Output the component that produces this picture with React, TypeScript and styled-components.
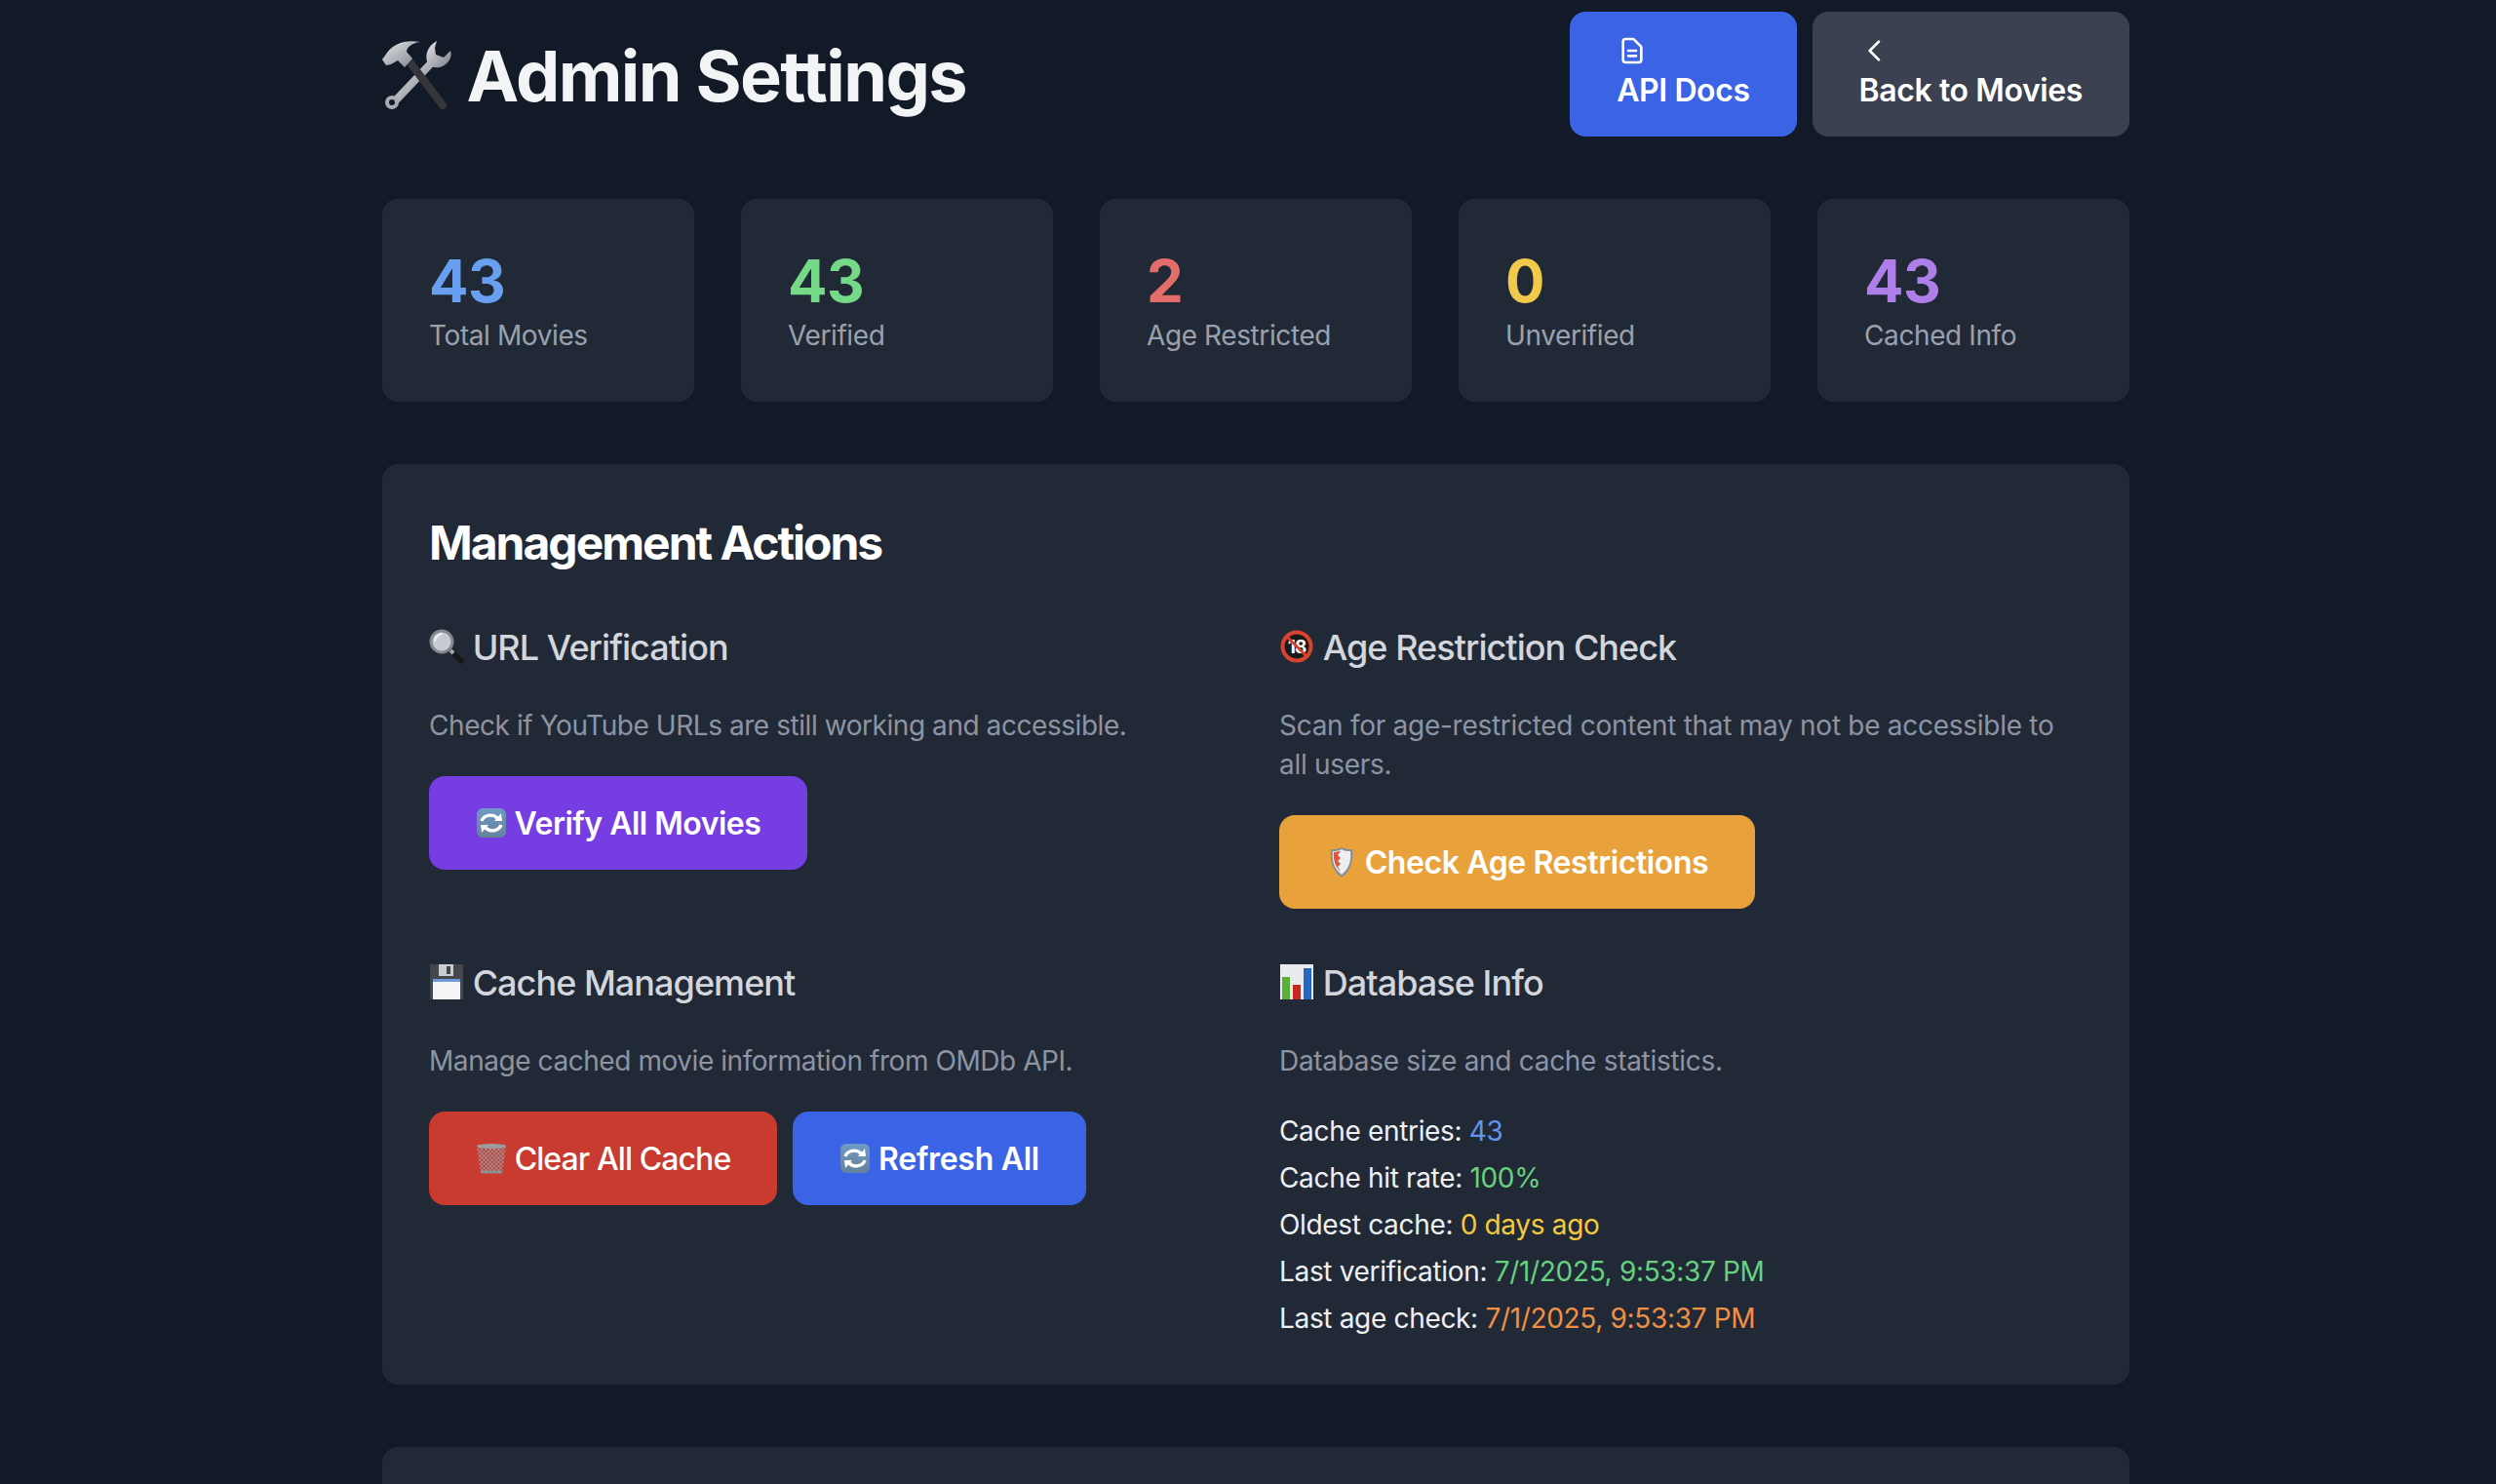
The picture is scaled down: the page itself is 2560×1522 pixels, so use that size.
import React from "react";
import styled, { createGlobalStyle } from "styled-components";

const GlobalStyle = createGlobalStyle`
  html, body {
    margin: 0;
    height: 100vh;
    overflow: hidden;
    background: #121927;
  }
  body {
    font-family: Inter, "Liberation Sans", sans-serif;
    -webkit-font-smoothing: antialiased;
  }
  * {
    box-sizing: border-box;
  }
`;

const Page = styled.div`
  width: 1792px;
  margin-left: 392px;
  padding-top: 12px;
  display: flex;
  flex-direction: column;
  gap: 64px;
`;

const Header = styled.header`
  display: flex;
  justify-content: space-between;
  align-items: flex-start;
`;

const Title = styled.h1`
  margin: 26px 0 0;
  font-size: 72px;
  line-height: 80px;
  font-weight: 700;
  letter-spacing: -1.6px;
  color: #f3f4f6;
  & svg {
    margin-right: -1px;
  }
`;

const HeaderActions = styled.div`
  display: flex;
  gap: 16px;
`;

const LinkButton = styled.a<{ $bg: string }>`
  display: block;
  height: 128px;
  padding: 24px 48px;
  border-radius: 16px;
  background: ${(p) => p.$bg};
  color: #fff;
  font-size: 32px;
  line-height: 48px;
  font-weight: 600;
  letter-spacing: -0.4px;
  & svg {
    display: block;
    width: 32px;
    height: 32px;
    margin-bottom: 1px;
  }
`;

const StatGrid = styled.div`
  display: grid;
  grid-template-columns: repeat(5, 1fr);
  gap: 48px;
`;

const StatCard = styled.div`
  padding: 48px;
  border-radius: 16px;
  background: #222936;
`;

const StatValue = styled.div<{ $color: string }>`
  font-size: 60px;
  line-height: 72px;
  font-weight: 700;
  letter-spacing: -0.5px;
  color: ${(p) => p.$color};
`;

const StatLabel = styled.div`
  font-size: 28px;
  line-height: 40px;
  letter-spacing: -0.4px;
  color: #9aa1ae;
`;

const Panel = styled.section`
  padding: 48px;
  border-radius: 16px;
  background: #222936;
`;

const PanelTitle = styled.h2`
  margin: 0 0 48px;
  padding-top: 1px;
  height: 64px;
  font-size: 48px;
  line-height: 64px;
  font-weight: 700;
  letter-spacing: -2px;
  color: #fff;
`;

const ActionGrid = styled.div`
  display: grid;
  grid-template-columns: 1fr 1fr;
  gap: 48px;
`;

const ActionTitle = styled.h3`
  margin: 0 0 32px;
  font-size: 36px;
  line-height: 56px;
  font-weight: 550;
  letter-spacing: -0.95px;
  color: #d3d6dc;
`;

const ActionText = styled.p<{ $tracking?: number }>`
  margin: 0 0 32px;
  font-size: 28px;
  line-height: 40px;
  letter-spacing: ${(p) => p.$tracking ?? -0.44}px;
  color: #8d94a3;
`;

const ButtonRow = styled.div`
  display: flex;
  gap: 16px;
`;

const ActionButton = styled.button<{ $bg: string; $weight?: number; $tracking?: number }>`
  height: 96px;
  padding: 2px 48px 0;
  border: 0;
  border-radius: 16px;
  background: ${(p) => p.$bg};
  color: #fff;
  font-family: inherit;
  font-size: 32px;
  line-height: 48px;
  font-weight: ${(p) => p.$weight ?? 600};
  letter-spacing: ${(p) => p.$tracking ?? -0.5}px;
`;

const InfoList = styled.div`
  display: flex;
  flex-direction: column;
  gap: 8px;
`;

const InfoRow = styled.div`
  font-size: 28px;
  line-height: 40px;
  letter-spacing: -0.33px;
  color: #eef0f3;
`;

const InfoValue = styled.span<{ $color: string }>`
  color: ${(p) => p.$color};
`;

const NextPanel = styled.div`
  height: 200px;
  border-radius: 16px;
  background: #222936;
`;

const Emoji = styled.svg`
  display: inline-block;
  width: 1em;
  height: 1em;
  vertical-align: -0.12em;
`;

const ToolsEmoji = () => (
  <Emoji viewBox="0 0 72 72">
    <defs>
      <linearGradient id="steel" x1="0" y1="0" x2="1" y2="1">
        <stop offset="0" stopColor="#e4e6ea" />
        <stop offset="1" stopColor="#7d8088" />
      </linearGradient>
    </defs>
    <path d="M10 66 L50 24" stroke="url(#steel)" strokeWidth="8" strokeLinecap="round" />
    <circle cx="10" cy="64" r="7" fill="#a9acb3" />
    <circle cx="10" cy="64" r="3" fill="#121927" />
    <path d="M56 1 C46 6 43 17 47 24 C51 30 62 30 68 22 C71 18 71 14 70 11 L63 18 L55 15 L54 8 Z" fill="url(#steel)" />
    <path d="M27 21 L62 67" stroke="#34363b" strokeWidth="8" strokeLinecap="round" />
    <path d="M0 20 L5 13 C11 4 24 -1 39 2 C30 3 25 8 25 12 L31 19 L23 28 L16 21 L9 25 L4 26 Z" fill="url(#steel)" />
  </Emoji>
);

const SearchEmoji = () => (
  <Emoji viewBox="0 0 36 36">
    <path d="M23 23 L33 33" stroke="#17181b" strokeWidth="5.5" strokeLinecap="round" />
    <path d="M22 22 L25 25" stroke="#a5a8ad" strokeWidth="4" />
    <circle cx="13" cy="13" r="11" fill="#c7cbd2" stroke="#85888f" strokeWidth="3" />
    <path d="M6 12 C7 8 9 6 13 5" stroke="#eef0f3" strokeWidth="2" fill="none" strokeLinecap="round" />
  </Emoji>
);

const NoAdultEmoji = () => (
  <Emoji viewBox="0 0 36 36">
    <circle cx="18" cy="18" r="14.5" fill="#1a1a1c" stroke="#d8432f" strokeWidth="4" />
    <text x="18" y="25" textAnchor="middle" fontFamily="Inter, sans-serif" fontSize="19" fontWeight="700" fill="#fff">
      18
    </text>
    <path d="M8 8 L28 28" stroke="#d8432f" strokeWidth="3" />
  </Emoji>
);

const RefreshEmoji = () => (
  <Emoji viewBox="0 0 32 32">
    <defs>
      <linearGradient id="refreshBg" x1="0" y1="0" x2="0" y2="1">
        <stop offset="0" stopColor="#6f9ac6" />
        <stop offset="1" stopColor="#66819b" />
      </linearGradient>
    </defs>
    <rect x="1" y="1" width="30" height="30" rx="6" fill="url(#refreshBg)" />
    <path d="M6 14 C8 8 17 6 22 11" stroke="#fff" strokeWidth="3.4" fill="none" />
    <path d="M19 14 L27 14 L26 6 Z" fill="#fff" />
    <path d="M26 18 C24 24 15 26 10 21" stroke="#fff" strokeWidth="3.4" fill="none" />
    <path d="M13 18 L5 18 L6 26 Z" fill="#fff" />
  </Emoji>
);

const ShieldEmoji = () => (
  <Emoji viewBox="0 0 32 32">
    <path d="M16 1 C20 3 24 3 27 3 C28 14 26 25 16 32 C6 25 4 14 5 3 C8 3 12 3 16 1 Z" fill="#8b8e94" />
    <path d="M16 3 C19 5 22 5 25 5 C26 14 24 23 16 29 Z" fill="#eceef0" />
    <path d="M16 3 C13 5 10 5 7 5 C6 14 8 23 16 29 Z" fill="#eceef0" />
    <path d="M8 6 L15 5 L12 9 L15 12 L12 15 L15 18 L12 21 L15 26 C10 22 7 14 8 6 Z" fill="#d9573f" />
  </Emoji>
);

const FloppyEmoji = () => (
  <Emoji viewBox="0 0 36 36">
    <rect x="1" y="0" width="34" height="36" fill="#45474c" />
    <rect x="10" y="0" width="15" height="12" fill="#c9ccd1" />
    <rect x="18" y="2" width="4" height="8" fill="#45474c" />
    <rect x="4" y="15" width="28" height="21" fill="#f4f5f7" />
    <rect x="4" y="15" width="28" height="3" fill="#6c9bd8" />
  </Emoji>
);

const ChartEmoji = () => (
  <Emoji viewBox="0 0 36 36">
    <rect x="1" y="0" width="34" height="36" fill="#e9ebee" />
    <rect x="3" y="13" width="8" height="23" fill="#58b038" />
    <rect x="14" y="21" width="8" height="15" fill="#c8281f" />
    <rect x="25" y="4" width="8" height="32" fill="#2468c4" />
  </Emoji>
);

const TrashEmoji = () => (
  <Emoji viewBox="0 0 32 32">
    <defs>
      <pattern id="mesh" width="3" height="3" patternUnits="userSpaceOnUse" patternTransform="rotate(45)">
        <rect width="3" height="3" fill="#a8453f" />
        <path d="M0 0 H3 M0 0 V3" stroke="#c9c5c5" strokeWidth="0.9" />
      </pattern>
    </defs>
    <path d="M1 3 H31 L27 31 H5 Z" fill="url(#mesh)" />
    <ellipse cx="16" cy="3.5" rx="15" ry="2.4" fill="#9e9c9e" />
    <rect x="5" y="28.5" width="22" height="3" rx="1" fill="#8f8e90" />
  </Emoji>
);

const stats = [
  { value: "43", label: "Total Movies", color: "#689ff1" },
  { value: "43", label: "Verified", color: "#76d988" },
  { value: "2", label: "Age Restricted", color: "#e26d6b" },
  { value: "0", label: "Unverified", color: "#f1ca4b" },
  { value: "43", label: "Cached Info", color: "#ae7ee9" },
];

const info = [
  { label: "Cache entries:", value: "43", color: "#5f95ec" },
  { label: "Cache hit rate:", value: "100%", color: "#66d180" },
  { label: "Oldest cache:", value: "0 days ago", color: "#f3c93f" },
  { label: "Last verification:", value: "7/1/2025, 9:53:37 PM", color: "#66d180" },
  { label: "Last age check:", value: "7/1/2025, 9:53:37 PM", color: "#ee9145" },
];

const App = () => {
  return (
    <Page>
      <GlobalStyle />
      <Header>
        <Title>
          <ToolsEmoji /> Admin Settings
        </Title>
        <HeaderActions>
          <LinkButton $bg="#3a63e6">
            <svg viewBox="0 0 24 24" fill="none" stroke="currentColor" strokeWidth="2" strokeLinecap="round" strokeLinejoin="round">
              <path d="M9 12h6m-6 4h6m2 5H7a2 2 0 01-2-2V5a2 2 0 012-2h5.586a1 1 0 01.707.293l5.414 5.414a1 1 0 01.293.707V19a2 2 0 01-2 2z" />
            </svg>
            API Docs
          </LinkButton>
          <LinkButton $bg="#3b4150">
            <svg viewBox="0 0 24 24" fill="none" stroke="currentColor" strokeWidth="2" strokeLinecap="round" strokeLinejoin="round">
              <path d="M15 19l-7-7 7-7" />
            </svg>
            Back to Movies
          </LinkButton>
        </HeaderActions>
      </Header>

      <StatGrid>
        {stats.map((s) => (
          <StatCard key={s.label}>
            <StatValue $color={s.color}>{s.value}</StatValue>
            <StatLabel>{s.label}</StatLabel>
          </StatCard>
        ))}
      </StatGrid>

      <Panel>
        <PanelTitle>Management Actions</PanelTitle>
        <ActionGrid>
          <div>
            <ActionTitle>
              <SearchEmoji /> URL Verification
            </ActionTitle>
            <ActionText>Check if YouTube URLs are still working and accessible.</ActionText>
            <ActionButton $bg="#753de2">
              <RefreshEmoji /> Verify All Movies
            </ActionButton>
          </div>
          <div>
            <ActionTitle>
              <NoAdultEmoji /> Age Restriction Check
            </ActionTitle>
            <ActionText $tracking={-0.28}>
              Scan for age-restricted content that may not be accessible to all users.
            </ActionText>
            <ActionButton $bg="#e9a23b" $tracking={-0.4}>
              <ShieldEmoji /> Check Age Restrictions
            </ActionButton>
          </div>
          <div>
            <ActionTitle>
              <FloppyEmoji /> Cache Management
            </ActionTitle>
            <ActionText>Manage cached movie information from OMDb API.</ActionText>
            <ButtonRow>
              <ActionButton $bg="#c93a30" $weight={500} $tracking={-0.9}>
                <TrashEmoji /> Clear All Cache
              </ActionButton>
              <ActionButton $bg="#3a63e6" $tracking={-0.3}>
                <RefreshEmoji /> Refresh All
              </ActionButton>
            </ButtonRow>
          </div>
          <div>
            <ActionTitle>
              <ChartEmoji /> Database Info
            </ActionTitle>
            <ActionText $tracking={-0.3}>Database size and cache statistics.</ActionText>
            <InfoList>
              {info.map((row) => (
                <InfoRow key={row.label}>
                  {row.label} <InfoValue $color={row.color}>{row.value}</InfoValue>
                </InfoRow>
              ))}
            </InfoList>
          </div>
        </ActionGrid>
      </Panel>

      <NextPanel />
    </Page>
  );
};

export default App;
